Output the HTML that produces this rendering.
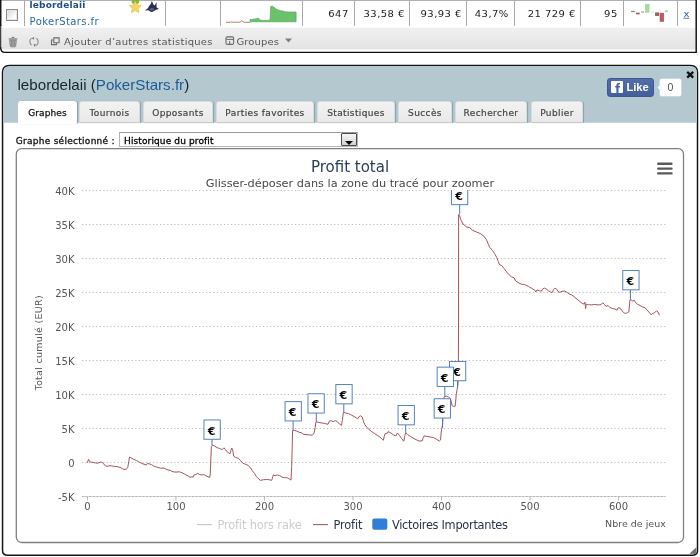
<!DOCTYPE html>
<html lang="fr">
<head>
<meta charset="utf-8">
<title>lebordelaii (PokerStars.fr)</title>
<style>
html,body{margin:0;padding:0;background:#fff;}
body{width:700px;height:557px;position:relative;overflow:hidden;font-family:"DejaVu Sans","Liberation Sans",sans-serif;font-size:10px;color:#222;}
.abs{position:absolute;}
.vd{position:absolute;top:0;width:1px;height:26px;background:#a9a9ab;}
.num{position:absolute;top:7.5px;transform:scaleY(.88);transform-origin:0 9.46px;margin-right:-.7px;color:#2a2a2a;line-height:12px;font-size:10px;color:#222;text-align:right;white-space:nowrap;letter-spacing:.42px;}
.tb{position:absolute;top:36.1px;transform:scaleY(.9);transform-origin:0 9.46px;line-height:12px;font-size:10px;color:#555;white-space:nowrap;letter-spacing:.24px;}
#ttl{left:17.5px;top:76.1px;font-family:"Liberation Sans",sans-serif;font-size:15.15px;line-height:17px;color:#1b242d;white-space:nowrap;}
#ttl span{color:#1d5a96;}
.tab{position:absolute;top:101px;height:22px;box-sizing:border-box;border:1px solid #d6dcdf;border-bottom-color:#c8c8c8;border-radius:3px 3px 0 0;background:linear-gradient(#f2f2f2,#e9e9e9);box-shadow:1px 0 1px rgba(90,110,120,.45);font-size:9px;color:#444;-webkit-text-stroke:.2px #444;text-align:center;line-height:23.5px;letter-spacing:.38px;white-space:nowrap;}
.tab.on{background:#fff;color:#111;-webkit-text-stroke:.25px #111;height:23px;border-color:#fff;border-bottom:none;letter-spacing:.12px;}
</style>
</head>
<body>
<div id="wrap" style="position:absolute;left:0;top:0;width:700px;height:557px;will-change:transform;transform:translateZ(0);">
<svg class="abs" style="left:0;top:0" width="700" height="557" viewBox="0 0 700 557">
<defs><linearGradient id="tbg" x1="0" y1="0" x2="0" y2="1"><stop offset="0" stop-color="#f0f0f0"/><stop offset="1" stop-color="#e3e3e3"/></linearGradient></defs>
<rect x="0" y="0" width="696" height="1" fill="#adb1b9"/>
<path d="M1.300 27.800H695.500V49.500H4.500Q1.300 49.500 1.300 46.500z" fill="url(#tbg)"/>
<path d="M.750 -2V26" fill="none" stroke="#0c0c0c" stroke-width="1.400"/><path d="M.700 25V48.300" fill="none" stroke="#1a1a1a" stroke-width="1.050"/><path d="M.750 47.500V48.300Q.900 52.350 5 52.350H696.200V-2" fill="none" stroke="#0c0c0c" stroke-width="1.450"/>
<path d="M2.550 72.500Q2.550 65.550 9.500 65.550H690.500Q697.500 65.550 697.500 72.500V550.600Q697.500 555.150 693 555.150H7Q2.550 555.150 2.550 550.600z" fill="#fff" stroke="#141414" stroke-width="1.500"/>
<path d="M3.300 122.800V72.500Q3.300 66.300 9.500 66.300H690.500Q696.750 66.300 696.750 72.500V122.800z" fill="#b4c8cf"/>
</svg>
<div class="vd" style="left:24px"></div>
<div class="vd" style="left:165px"></div>
<div class="vd" style="left:220px"></div>
<div class="vd" style="left:302px"></div>
<div class="vd" style="left:354px"></div>
<div class="vd" style="left:409px"></div>
<div class="vd" style="left:466px"></div>
<div class="vd" style="left:514px"></div>
<div class="vd" style="left:580px"></div>
<div class="vd" style="left:623px"></div>
<div class="vd" style="left:677px"></div>
<div class="abs" style="left:6.2px;top:9.4px;width:10px;height:10px;border:1px solid #8a8a8a;background:linear-gradient(135deg,#d4d4d4,#fff 75%);box-shadow:inset 0 0 0 1px #e8e8e8;"></div>
<div class="abs" style="left:29.6px;top:-.5px;font-size:9px;line-height:11px;font-weight:bold;color:#1f4e80;letter-spacing:.15px;">lebordelaii</div>
<div class="abs" style="left:29.6px;top:16.1px;font-size:10px;line-height:12px;color:#2a68a0;letter-spacing:.42px;">PokerStars.fr</div>
<div class="num" style="right:352px">647</div>
<div class="num" style="right:296px">33,58 €</div>
<div class="num" style="right:239px">93,93 €</div>
<div class="num" style="right:192px">43,7%</div>
<div class="num" style="right:125px">21 729 €</div>
<div class="num" style="right:83px">95</div>
<div class="abs" style="left:683.4px;top:7.9px;font-size:10px;line-height:12px;color:#2a5f9e;text-decoration:underline;transform:scaleY(.8);transform-origin:0 9px;">x</div>
<div class="tb" style="left:64px">Ajouter d’autres statistiques</div>
<div class="tb" style="left:236.4px;letter-spacing:.13px">Groupes</div>
<!--ICONS_START--><svg class="abs" style="left:0;top:0" width="700" height="56" viewBox="0 0 700 56">
<!-- star -->
<ellipse cx="135.400" cy="1.500" rx="3.800" ry="2.700" fill="#86b53c"/>
<path d="M135.200 1.300l1.800 3.700 4.100.600-3 2.900.800 4.100-3.700-2-3.700 2 .800-4.100-3-2.900 4.100-.600z" fill="#f3d766" stroke="#e6c44c" stroke-width=".8" stroke-linejoin="round"/>
<!-- shark -->
<path d="M151.900 .900L153.400 4.600 154.700 5.400 156.600 1.900 156.500 7.300 158.900 9.100 155.400 10.100Q153.800 11.900 151.900 11.900 150 11.900 148.500 10.300L144.900 10.500 148.200 8.100Q148.600 5.600 150.300 4.800z" fill="#2b2d52"/>
<ellipse cx="151.900" cy="9.300" rx="2.300" ry="1.200" fill="#5a5d85"/>
<!-- profit sparkline -->
<path d="M226 22.300h4l.8-.5 1 .4h8.500l1.300-1.600 1.200 1.200 1.800.5h5.500" fill="none" stroke="#b0705c" stroke-width=".9"/>
<path d="M250.100 21.800v-2.300l3.500-.3 2.600-.4 1.600-.6 1.500.8 1.400 1.200 3 .2h5.700l.8-1.800.500-12.200 1.600-.2 1.400.8 1.600 1.600 2.200 1.200 3 .9 2.600.4 1.600.7 4 .2h7.400v9.800z" fill="#6cc16c" stroke="#57a95a" stroke-width=".7" stroke-linejoin="round"/>
<!-- bars -->
<rect x="631.1" y="10.9" width="3.8" height="1.2" fill="#5d9d70"/>
<rect x="636" y="12.700" width="3.700" height="1.600" fill="#a4525c"/>
<rect x="641.1" y="11.500" width="2.900" height="1.100" fill="#a88868"/>
<rect x="645.400" y="4.300" width="3.700" height="8" fill="#a6dba0" stroke="#8fcf8a" stroke-width=".5"/>
<rect x="650.900" y="11.800" width="2.800" height=".8" fill="#b9dab4"/>
<rect x="655.200" y="12.800" width="3.700" height="3" fill="#a95863" stroke="#98454f" stroke-width=".4"/>
<rect x="660" y="13.100" width="3.800" height="8.400" fill="#bd5a66" stroke="#a84a55" stroke-width=".5"/>
<rect x="664.800" y="10.300" width="3.200" height="1.800" fill="#a6dba0"/>
<!-- trash -->
<g fill="none" stroke="#7c7c7c">
<path d="M9.300 38.900h7.400" stroke-width="1.500" stroke-linecap="round" stroke="#8a8a8a"/>
<path d="M11.600 37.400h2.800" stroke-width="1.100"/>
<path d="M9.700 40.300l.6 5.600q.1 .9 1 .9h3.400q.9 0 1-.9l.6-5.600z" fill="#b4b4b4" stroke-width=".9"/>
<path d="M11.600 41v5M13 41v5M14.400 41v5" stroke="#6a6a6a" stroke-width=".6"/>
<!-- refresh -->
<path d="M36.400 38.200a4 4.200 0 0 1 0 7M31.600 45.100a4 4.200 0 0 1 0-7" stroke-width="1.050" stroke="#868686"/>
<path d="M34 36.700l-2.700 1.800 2.900 1.300zM34 46.800l2.700-1.800-2.900-1.300z" fill="#868686" stroke="none"/>
<!-- copy -->
<path d="M53.800 37.900h5.300v4.800h-5.300z" stroke="#6c6c6c" stroke-width="1.100"/>
<path d="M53.500 40h-2v4.600h5v-1.600" stroke="#6c6c6c" stroke-width="1.100"/>
<!-- groupes icon -->
<rect x="226" y="36.900" width="7.600" height="7.500" rx="1.400" stroke="#6a6a6a" stroke-width="1.100"/>
<path d="M226.300 39.400h7M229.600 41v3.200" stroke="#6a6a6a" stroke-width="1"/>
</g>
<path d="M285 38.600h7l-3.500 3.900z" fill="#7d7d7d"/>
</svg>
<!--ICONS_END-->
<div class="abs" id="ttl">lebordelaii (<span>PokerStars.fr</span>)</div>
<div class="tab on" style="left:18px;width:59px">Graphes</div>
<div class="tab" style="left:79px;width:61px">Tournois</div>
<div class="tab" style="left:143px;width:70px">Opposants</div>
<div class="tab" style="left:216px;width:98px">Parties favorites</div>
<div class="tab" style="left:317px;width:78px">Statistiques</div>
<div class="tab" style="left:398px;width:54px">Succès</div>
<div class="tab" style="left:455px;width:72px">Rechercher</div>
<div class="tab" style="left:531px;width:52px">Publier</div>
<div class="abs" style="left:15.7px;top:136px;font-size:9px;line-height:11px;letter-spacing:.28px;color:#111;-webkit-text-stroke:.3px #111;white-space:nowrap;">Graphe sélectionné :</div>
<div class="abs" style="left:119px;top:132px;width:237px;height:13px;border:1px solid #b4b4b4;border-top-color:#9c9c9c;background:#fff;"></div>
<div class="abs" style="left:124px;top:136px;font-size:9px;line-height:11px;letter-spacing:.12px;color:#000;-webkit-text-stroke:.3px #000;white-space:nowrap;">Historique du profit</div>
<div class="abs" style="left:341px;top:133px;width:14px;height:11px;border:1px solid #4a4a4a;border-radius:1px;background:linear-gradient(#f6f6f6,#d2d2d2);"></div>
<div class="abs" style="left:345px;top:140.500px;width:0;height:0;border-left:4.200px solid transparent;border-right:4.200px solid transparent;border-top:4px solid #000;"></div>
<div class="abs" style="left:607px;top:77.8px;width:47px;height:19px;box-sizing:border-box;border:1px solid #3f5890;border-radius:3px;background:linear-gradient(#526da6,#445f9b);"></div>
<div class="abs" style="left:610.8px;top:81.2px;width:12.2px;height:12.2px;background:#fff;border-radius:1px;overflow:hidden;"><div class="abs" style="left:4.2px;top:-1.5px;font-family:'Liberation Sans',sans-serif;font-weight:bold;font-size:15px;line-height:17px;color:#48639f;">f</div></div>
<div class="abs" style="left:626.4px;top:80.5px;font-family:'Liberation Sans',sans-serif;font-weight:bold;font-size:11.2px;line-height:13px;color:#fff;">Like</div>
<div class="abs" style="left:660px;top:79px;width:21px;height:17px;box-sizing:border-box;border:0;box-shadow:0 0 0 .6px #dfe5e8;border-radius:2px;background:#fff;font-family:'Liberation Sans',sans-serif;font-size:10.500px;line-height:17.500px;text-align:center;color:#4a4f57;">0</div>
<svg class="abs" style="left:656px;top:82px" width="6" height="11" viewBox="0 0 6 11"><path d="M5 1.800L1.600 5.500 5 9.200z" fill="#fff" stroke="#e4e9ec" stroke-width=".5"/></svg>
<svg class="abs" style="left:685px;top:69px" width="11" height="11" viewBox="0 0 11 11"><path d="M2.200 2.800l6 5.800M8.200 2.800l-6 5.800" stroke="#111" stroke-width="2.300" fill="none"/></svg>
<svg class="abs" style="left:0;top:0" width="700" height="557" viewBox="0 0 700 557">
<rect x="16.3" y="148.7" width="667.2" height="393.800" rx="5.5" ry="5.5" fill="#fff" stroke="#808080" stroke-width="1.300"/>
<text x="350" y="172.2" text-anchor="middle" font-family="DejaVu Sans, sans-serif" font-size="15" fill="#2a3d55">Profit total</text>
<text x="350" y="186.6" text-anchor="middle" font-family="DejaVu Sans, sans-serif" font-size="11.3" fill="#474747">Glisser-déposer dans la zone du tracé pour zoomer</text>
<g stroke="#5a5a5a" stroke-width="2.400" stroke-linecap="round"><path d="M658.200 163.800h13.200"/><path d="M658.200 168.600h13.200"/><path d="M658.200 173.400h13.200"/></g>
<path d="M82 190.5H665.5" stroke="#bcbcbc" stroke-width="1" stroke-dasharray="1.2 2.35" fill="none"/><path d="M82 224.5H665.5" stroke="#bcbcbc" stroke-width="1" stroke-dasharray="1.2 2.35" fill="none"/><path d="M82 258.5H665.5" stroke="#bcbcbc" stroke-width="1" stroke-dasharray="1.2 2.35" fill="none"/><path d="M82 292.5H665.5" stroke="#bcbcbc" stroke-width="1" stroke-dasharray="1.2 2.35" fill="none"/><path d="M82 326.5H665.5" stroke="#bcbcbc" stroke-width="1" stroke-dasharray="1.2 2.35" fill="none"/><path d="M82 360.5H665.5" stroke="#bcbcbc" stroke-width="1" stroke-dasharray="1.2 2.35" fill="none"/><path d="M82 394.5H665.5" stroke="#bcbcbc" stroke-width="1" stroke-dasharray="1.2 2.35" fill="none"/><path d="M82 428.5H665.5" stroke="#bcbcbc" stroke-width="1" stroke-dasharray="1.2 2.35" fill="none"/><path d="M82 462.5H665.5" stroke="#bcbcbc" stroke-width="1" stroke-dasharray="1.2 2.35" fill="none"/>
<path d="M82 496.5H665.5" stroke="#d9d9d9" stroke-width="1" fill="none"/>
<path d="M82 496.5H665.5" stroke="#b6b6b6" stroke-width="1" stroke-dasharray="2 1.55" fill="none"/>
<path d="M87.5 496.5v4" stroke="#b9b9b9" stroke-width="1"/><path d="M176.0 496.5v4" stroke="#b9b9b9" stroke-width="1"/><path d="M264.5 496.5v4" stroke="#b9b9b9" stroke-width="1"/><path d="M353.0 496.5v4" stroke="#b9b9b9" stroke-width="1"/><path d="M441.5 496.5v4" stroke="#b9b9b9" stroke-width="1"/><path d="M530.0 496.5v4" stroke="#b9b9b9" stroke-width="1"/><path d="M618.5 496.5v4" stroke="#b9b9b9" stroke-width="1"/>
<g font-family="DejaVu Sans, sans-serif" font-size="10" fill="#555"><text x="74.5" y="194.5" text-anchor="end">40K</text><text x="74.5" y="228.5" text-anchor="end">35K</text><text x="74.5" y="262.5" text-anchor="end">30K</text><text x="74.5" y="296.5" text-anchor="end">25K</text><text x="74.5" y="330.5" text-anchor="end">20K</text><text x="74.5" y="364.5" text-anchor="end">15K</text><text x="74.5" y="398.5" text-anchor="end">10K</text><text x="74.5" y="432.5" text-anchor="end">5K</text><text x="74.5" y="466.5" text-anchor="end">0</text><text x="74.5" y="500.5" text-anchor="end">-5K</text><text x="87.5" y="509.5" text-anchor="middle">0</text><text x="176.0" y="509.5" text-anchor="middle">100</text><text x="264.5" y="509.5" text-anchor="middle">200</text><text x="353.0" y="509.5" text-anchor="middle">300</text><text x="441.5" y="509.5" text-anchor="middle">400</text><text x="530.0" y="509.5" text-anchor="middle">500</text><text x="618.5" y="509.5" text-anchor="middle">600</text>
<text x="665.8" y="526.7" text-anchor="end" font-size="9.5" fill="#555">Nbre de jeux</text>
<text transform="translate(42.2 342.8) rotate(-90)" text-anchor="middle" font-size="9.5" letter-spacing=".3" fill="#555">Total cumulé (EUR)</text>
</g>
<svg x="81" y="190" width="586" height="312" viewBox="81 190 586 312">
<path d="M87.2 462.9 L88.6 459.4 L89.5 461.7 L92.0 462.3 L95.4 462.9 L97.7 463.2 L100.0 462.3 L101.7 462.1 L103.4 463.4 L105.1 465.7 L106.9 466.3 L110.3 465.7 L113.7 466.3 L117.1 466.6 L120.0 467.4 L122.3 468.6 L124.0 469.5 L126.3 469.1 L127.7 467.4 L128.6 462.9 L129.5 457.1 L130.9 457.7 L133.1 459.1 L136.6 460.6 L139.4 462.3 L141.7 463.4 L144.0 464.2 L146.3 465.1 L147.4 463.4 L149.1 463.8 L151.4 464.6 L153.7 466.1 L157.1 467.2 L160.6 468.2 L164.0 468.1 L166.9 469.6 L170.3 470.4 L173.1 471.8 L176.0 472.1 L179.4 471.8 L182.3 472.9 L185.1 474.4 L188.0 475.9 L189.9 477.3 L192.0 476.7 L193.1 477.3 L193.9 475.0 L196.0 474.4 L197.7 473.3 L199.4 474.4 L201.7 475.0 L203.4 474.4 L205.7 475.6 L208.0 476.7 L209.7 477.5 L210.3 473.9 L210.9 457.9 L211.4 446.4 L212.8 445.3 L214.9 446.2 L217.1 447.6 L219.4 448.5 L222.3 449.6 L224.0 447.8 L225.1 449.3 L226.3 451.0 L228.0 452.4 L229.9 453.9 L230.9 450.4 L231.8 448.1 L232.9 451.0 L233.7 456.1 L235.4 457.3 L238.3 458.3 L240.7 460.8 L243.0 463.4 L245.9 464.3 L248.2 465.5 L250.6 467.8 L252.3 470.7 L254.7 473.6 L256.4 476.6 L258.7 478.9 L260.5 480.4 L263.4 479.7 L266.3 479.5 L269.2 479.7 L271.6 480.4 L272.4 478.3 L273.3 474.8 L275.1 475.7 L277.4 475.0 L279.7 475.7 L282.1 477.1 L284.4 477.7 L287.3 477.7 L289.1 478.9 L291.0 480.1 L291.7 466.6 L292.6 430.5 L294.3 430.3 L296.6 431.1 L299.0 432.2 L301.3 432.6 L303.1 434.2 L306.0 434.6 L309.5 434.9 L312.4 435.2 L314.1 433.1 L315.2 427.4 L316.0 421.7 L318.3 422.3 L321.1 422.9 L324.6 423.4 L328.0 424.3 L329.4 421.1 L330.9 420.6 L333.1 421.7 L335.4 420.6 L337.1 421.5 L339.4 424.0 L341.5 425.4 L342.3 420.6 L343.4 412.3 L345.1 412.8 L348.6 413.7 L351.4 415.1 L354.9 416.9 L357.7 418.9 L359.1 416.6 L360.6 415.8 L362.3 417.1 L363.4 421.1 L364.8 424.6 L366.9 427.4 L369.1 429.5 L371.4 431.4 L374.3 433.4 L377.1 435.2 L380.0 437.1 L382.3 439.4 L383.4 440.2 L384.2 436.6 L385.1 433.7 L387.4 433.1 L388.0 431.6 L390.9 433.0 L393.7 435.1 L396.0 435.9 L397.4 433.0 L399.4 435.3 L401.7 438.7 L403.8 441.2 L404.9 435.3 L405.7 433.0 L407.4 434.4 L410.3 436.4 L413.1 438.1 L416.0 439.6 L418.9 441.0 L422.3 440.8 L423.2 437.6 L424.0 435.9 L426.9 436.4 L430.3 437.0 L433.7 437.6 L436.6 439.3 L439.4 441.0 L440.6 439.9 L441.1 433.0 L441.9 427.9 L442.6 423.9 L443.2 410.0 L444.0 397.0 L446.3 396.2 L448.6 397.0 L450.3 398.5 L451.4 402.1 L452.0 405.6 L453.7 406.5 L455.2 406.1 L455.7 401.0 L456.3 394.1 L457.1 389.6 L457.9 385.0 L458.3 370.0 L458.5 340.0 L458.6 214.5 L459.1 214.7 L459.5 215.3 L460.7 219.5 L463.1 224.1 L466.3 226.8 L469.5 227.6 L472.8 230.5 L476.8 232.1 L480.8 233.8 L484.1 236.5 L486.5 239.7 L488.1 243.8 L489.7 247.3 L492.5 250.6 L494.6 253.5 L496.7 257.5 L498.3 261.5 L499.4 264.5 L501.8 265.6 L504.3 268.8 L506.7 272.0 L509.1 274.8 L511.5 276.9 L514.0 277.7 L515.6 280.9 L518.0 282.5 L521.2 284.2 L524.5 284.5 L528.4 286.4 L531.9 288.5 L534.7 290.1 L535.9 291.9 L537.0 289.9 L539.3 290.8 L541.6 291.0 L542.7 288.9 L544.4 288.1 L546.1 288.9 L548.4 290.8 L550.7 292.1 L552.4 292.4 L553.6 289.3 L554.9 288.1 L556.8 289.3 L558.1 291.6 L559.9 292.4 L562.1 291.2 L564.4 291.0 L566.7 292.1 L569.0 293.9 L571.9 295.0 L574.1 296.7 L577.0 299.2 L579.9 301.5 L582.1 303.3 L584.2 304.1 L584.9 302.2 L585.6 308.7 L586.3 304.1 L588.4 304.7 L591.3 304.9 L594.7 304.5 L598.1 304.9 L601.0 304.7 L602.7 302.7 L604.1 304.1 L604.5 304.5 L606.0 306.5 L608.0 305.5 L610.0 307.5 L612.5 308.5 L615.0 309.0 L617.0 310.2 L618.5 307.5 L620.5 308.5 L622.5 311.5 L624.5 313.0 L626.0 313.5 L627.5 312.5 L628.8 312.0 L629.5 305.0 L630.0 299.5 L631.5 300.0 L632.5 301.2 L634.2 300.2 L635.5 302.5 L637.5 304.2 L640.0 305.5 L642.5 306.8 L645.0 307.8 L647.0 310.0 L649.0 312.2 L651.2 314.8 L652.5 313.5 L654.5 312.8 L656.5 310.8 L658.0 312.0 L659.5 315.2" fill="none" stroke="#a5555c" stroke-width="1" stroke-linejoin="round"/>
<path d="M212.0 439.4V445.3" stroke="#4a79b3" stroke-width="1" fill="none"/><rect x="203.95" y="419.95" width="16.3" height="19.3" fill="#fff" stroke="#4d7db8" stroke-width=".95"/><text x="211.5" y="434.6" text-anchor="middle" font-family="DejaVu Sans, sans-serif" font-weight="bold" font-size="11" fill="#000">€</text>
<path d="M293.1 421.1V430.3" stroke="#4a79b3" stroke-width="1" fill="none"/><rect x="285.05" y="401.65" width="16.3" height="19.3" fill="#fff" stroke="#4d7db8" stroke-width=".95"/><text x="292.6" y="416.3" text-anchor="middle" font-family="DejaVu Sans, sans-serif" font-weight="bold" font-size="11" fill="#000">€</text>
<path d="M316.3 413.2V421.7" stroke="#4a79b3" stroke-width="1" fill="none"/><rect x="307.95" y="393.75" width="16.3" height="19.3" fill="#fff" stroke="#4d7db8" stroke-width=".95"/><text x="315.5" y="408.4" text-anchor="middle" font-family="DejaVu Sans, sans-serif" font-weight="bold" font-size="11" fill="#000">€</text>
<path d="M343.8 404.0V412.3" stroke="#4a79b3" stroke-width="1" fill="none"/><rect x="335.85" y="384.55" width="16.3" height="19.3" fill="#fff" stroke="#4d7db8" stroke-width=".95"/><text x="343.4" y="399.2" text-anchor="middle" font-family="DejaVu Sans, sans-serif" font-weight="bold" font-size="11" fill="#000">€</text>
<path d="M405.7 425.0V433.0" stroke="#4a79b3" stroke-width="1" fill="none"/><rect x="398.05" y="405.55" width="16.3" height="19.3" fill="#fff" stroke="#4d7db8" stroke-width=".95"/><text x="405.6" y="420.2" text-anchor="middle" font-family="DejaVu Sans, sans-serif" font-weight="bold" font-size="11" fill="#000">€</text>
<path d="M442.6 418.2V427.9" stroke="#4a79b3" stroke-width="1" fill="none"/><rect x="434.15" y="398.75" width="16.3" height="19.3" fill="#fff" stroke="#4d7db8" stroke-width=".95"/><text x="441.7" y="413.4" text-anchor="middle" font-family="DejaVu Sans, sans-serif" font-weight="bold" font-size="11" fill="#000">€</text>
<path d="M457.5 380.9V388.5" stroke="#4a79b3" stroke-width="1" fill="none"/><rect x="449.45" y="361.45" width="16.3" height="19.3" fill="#fff" stroke="#4d7db8" stroke-width=".95"/><text x="457.0" y="376.1" text-anchor="middle" font-family="DejaVu Sans, sans-serif" font-weight="bold" font-size="11" fill="#000">€</text>
<path d="M444.8 386.6V396.4" stroke="#4a79b3" stroke-width="1" fill="none"/><rect x="437.15" y="367.15" width="16.3" height="19.3" fill="#fff" stroke="#4d7db8" stroke-width=".95"/><text x="444.7" y="381.8" text-anchor="middle" font-family="DejaVu Sans, sans-serif" font-weight="bold" font-size="11" fill="#000">€</text>
<path d="M459.7 204.8V214.3" stroke="#4a79b3" stroke-width="1" fill="none"/><rect x="451.45" y="185.35" width="16.3" height="19.3" fill="#fff" stroke="#4d7db8" stroke-width=".95"/><text x="459.0" y="200.0" text-anchor="middle" font-family="DejaVu Sans, sans-serif" font-weight="bold" font-size="11" fill="#000">€</text>
<path d="M630.4 290.0V299.5" stroke="#4a79b3" stroke-width="1" fill="none"/><rect x="622.75" y="270.55" width="16.3" height="19.3" fill="#fff" stroke="#4d7db8" stroke-width=".95"/><text x="630.3" y="285.2" text-anchor="middle" font-family="DejaVu Sans, sans-serif" font-weight="bold" font-size="11" fill="#000">€</text>
</svg>
<g font-family="DejaVu Sans, sans-serif" font-size="11.4">
<path d="M197 524.6h15" stroke="#ccc" stroke-width="1.3"/>
<text x="217.4" y="528.9" fill="#ccc" letter-spacing="-.15">Profit hors rake</text>
<path d="M313 524.6h15" stroke="#a85c62" stroke-width="1.1"/>
<text x="333.5" y="528.9" fill="#27364a" letter-spacing="-.15">Profit</text>
<rect x="372.3" y="518.4" width="15" height="11.4" rx="2" ry="2" fill="#2f7ed8"/>
<text x="392" y="528.9" fill="#27364a" letter-spacing="-.3">Victoires Importantes</text>
</g>
<path d="M696.300 547.200V553.800H689.300z" fill="#8c8c8c"/><path d="M696.300 548.400l-6 5.600M696.300 550.400l-4 3.600M696.300 552.400l-2 1.600" stroke="#4a4a4a" stroke-width=".7" fill="none"/>
</svg>
</div>
</body>
</html>
